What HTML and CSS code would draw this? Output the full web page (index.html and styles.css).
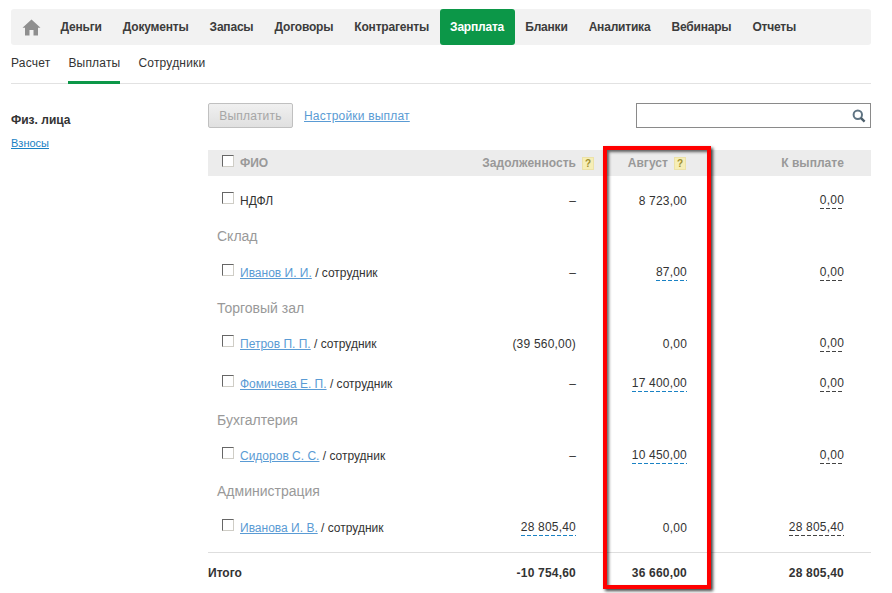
FILE: index.html
```html
<!DOCTYPE html>
<html lang="ru">
<head>
<meta charset="utf-8">
<title>Зарплата — выплаты</title>
<link rel="stylesheet" href="styles.css">
</head>
<body>
<div class="page">
  <nav class="topnav">
    <a class="home" aria-label="Главная"><svg width="19" height="17" viewBox="0 0 19 17"><path d="M9.5 0.5 L18.5 8.8 L16 8.8 L16 16.5 L11.5 16.5 L11.5 11 L7.5 11 L7.5 16.5 L3 16.5 L3 8.8 L0.5 8.8 Z" fill="#8f8f8f"/></svg></a>
    <a class="nav-item">Деньги</a>
    <a class="nav-item">Документы</a>
    <a class="nav-item">Запасы</a>
    <a class="nav-item">Договоры</a>
    <a class="nav-item">Контрагенты</a>
    <a class="nav-item active">Зарплата</a>
    <a class="nav-item">Бланки</a>
    <a class="nav-item">Аналитика</a>
    <a class="nav-item">Вебинары</a>
    <a class="nav-item">Отчеты</a>
  </nav>
  <div class="tabs">
    <a class="tab">Расчет</a>
    <a class="tab current">Выплаты</a>
    <a class="tab">Сотрудники</a>
  </div>
  <div class="content">
    <aside class="side">
      <div class="side-title">Физ. лица</div>
      <a class="side-link">Взносы</a>
    </aside>
    <main class="main">
      <div class="toolbar">
        <button class="pay-btn" disabled>Выплатить</button>
        <a class="settings">Настройки выплат</a>
        <div class="search"><svg width="14" height="14" viewBox="0 0 14 14"><circle cx="5.8" cy="5.8" r="4.2" fill="none" stroke="#5f7483" stroke-width="2"/><path d="M8.8 8.8 L12.6 12.6" stroke="#4d5f6c" stroke-width="2.4"/></svg></div>
      </div>
      <div class="row head">
        <div class="name"><span class="check"></span>ФИО</div>
        <div class="num">Задолженность<span class="hint hang">?</span></div>
        <div class="num">Август<span class="hint tucked">?</span></div>
        <div class="num">К выплате</div>
      </div>
      <div class="row">
        <div class="name"><span class="check"></span><span>НДФЛ</span></div>
        <div class="num">–</div>
        <div class="num">8 723,00</div>
        <div class="num"><span class="dash">0,00</span></div>
      </div>
      <div class="group">Склад</div>
      <div class="row">
        <div class="name"><span class="check"></span><span><a class="person">Иванов И. И.</a> / сотрудник</span></div>
        <div class="num">–</div>
        <div class="num"><span class="dash blue">87,00</span></div>
        <div class="num"><span class="dash">0,00</span></div>
      </div>
      <div class="group">Торговый зал</div>
      <div class="row short">
        <div class="name"><span class="check"></span><span><a class="person">Петров П. П.</a> / сотрудник</span></div>
        <div class="num">(39 560,00)</div>
        <div class="num">0,00</div>
        <div class="num"><span class="dash">0,00</span></div>
      </div>
      <div class="row tall">
        <div class="name"><span class="check"></span><span><a class="person">Фомичева Е. П.</a> / сотрудник</span></div>
        <div class="num">–</div>
        <div class="num"><span class="dash blue">17 400,00</span></div>
        <div class="num"><span class="dash">0,00</span></div>
      </div>
      <div class="group low">Бухгалтерия</div>
      <div class="row">
        <div class="name"><span class="check"></span><span><a class="person">Сидоров С. С.</a> / сотрудник</span></div>
        <div class="num">–</div>
        <div class="num"><span class="dash blue">10 450,00</span></div>
        <div class="num"><span class="dash">0,00</span></div>
      </div>
      <div class="group">Администрация</div>
      <div class="row">
        <div class="name"><span class="check"></span><span><a class="person">Иванова И. В.</a> / сотрудник</span></div>
        <div class="num"><span class="dash blue">28 805,40</span></div>
        <div class="num">0,00</div>
        <div class="num"><span class="dash">28 805,40</span></div>
      </div>
      <div class="row total">
        <div class="name total-name">Итого</div>
        <div class="num">-10 754,60</div>
        <div class="num">36 660,00</div>
        <div class="num">28 805,40</div>
      </div>
    </main>
  </div>
  <div class="highlight"></div>
</div>
</body>
</html>
```
FILE: styles.css
```css
* { box-sizing: border-box; }
html, body { margin: 0; padding: 0; background: #fff; }
body { font-family: "Liberation Sans", Arial, sans-serif; font-size: 12px; color: #333; }
.page { position: relative; width: 892px; height: 593px; overflow: hidden; padding: 9px 21px 0 11px; }

.topnav { display: flex; height: 36px; background: #f2f2f2; border-radius: 3px; align-items: stretch; }
.home { width: 39px; display: flex; align-items: center; padding-left: 11px; }
.home svg { filter: blur(0.4px); }
.nav-item { display: flex; align-items: center; padding: 0 10.55px; font-weight: bold; font-size: 12px; letter-spacing: -0.2px; color: #3c3c3c; }
.nav-item.active { background: #0c9748; color: #fff; border-radius: 3px; }

.tabs { display: flex; height: 39px; gap: 18px; border-bottom: 1px solid #e2e2e2; }
.tab { display: block; height: 39px; line-height: 36px; color: #333; letter-spacing: 0.2px; }
.tab.current { border-bottom: 3px solid #0c9748; }

.content { display: flex; }
.side { width: 197px; padding-top: 29px; }
.side-title { font-weight: bold; color: #333; line-height: 14px; margin-bottom: 9px; }
.side-link { font-size: 11px; color: #1a82c4; text-decoration: underline; line-height: 14px; }

.main { width: 663px; padding-top: 19px; }
.toolbar { display: flex; align-items: center; height: 25px; margin-bottom: 22px; }
.pay-btn { width: 85px; height: 25px; padding: 0; font: inherit; color: #a6a6a6; letter-spacing: 0.2px; background: linear-gradient(#f0f0f0, #e0e0e0); border: 1px solid #c0c0c0; border-radius: 2px; }
.settings { margin-left: 11px; color: #5a9bd4; text-decoration: underline; letter-spacing: 0.2px; }
.search { margin-left: auto; width: 235px; height: 25px; border: 1px solid #8a8a8a; display: flex; align-items: center; justify-content: flex-end; padding-right: 4px; background: #fff; }

.row { display: grid; grid-template-columns: 1fr 150px 111px 157px; padding: 2px 27px 0 0; height: 36px; align-items: center; }
.row.short { height: 35px; padding-top: 0; }
.row.tall { height: 44px; padding-top: 2px; margin-bottom: -4px; }
.head { height: 26px; padding-top: 0; margin-bottom: 6px; background: #ececec; color: #999; font-weight: bold; }
.name { display: flex; align-items: center; padding-left: 14px; white-space: nowrap; }
.num { text-align: right; white-space: nowrap; letter-spacing: 0.2px; }
.head .num { letter-spacing: 0.05px; }
.group { height: 36px; line-height: 36px; padding-left: 9px; font-size: 14px; color: #999; }
.group.low { line-height: 38px; }

.check { width: 12px; height: 12px; margin: -6px 6px 0 0; border-style: solid; border-color: #666 #cfcdc6 #cfcdc6 #666; border-width: 1.5px; background: #fff; flex: none; }
.head .check { margin-top: -4px; }

.person { color: #5a9bd4; text-decoration: underline; }
.dash { display: inline-block; line-height: 15px; padding-bottom: 1px; background: repeating-linear-gradient(90deg, #444 0 4px, transparent 4px 6px) left bottom / 100% 1px no-repeat; }
.dash.blue { background-image: repeating-linear-gradient(90deg, #1a82c4 0 4px, transparent 4px 6px); }
.hint { display: inline-block; width: 12px; height: 13px; margin-left: 6px; vertical-align: middle; background: #f6eeb6; border: 1px solid #ece2a8; color: #a09030; font-size: 10px; line-height: 11px; text-align: center; letter-spacing: 0; }
.hint.hang { margin-right: -18px; }
.hint.tucked { margin-right: 1px; }

.total { margin-top: 7px; height: 40px; padding-top: 0; border-top: 1px solid #dedede; font-weight: bold; }
.total-name { padding-left: 0; }

.highlight { position: absolute; left: 603px; top: 146px; width: 108px; height: 443px; border: 4px solid #f00; box-shadow: 2px 2px 3px rgba(0,0,0,.75), inset 2px 2px 3px rgba(0,0,0,.6); pointer-events: none; }
```
